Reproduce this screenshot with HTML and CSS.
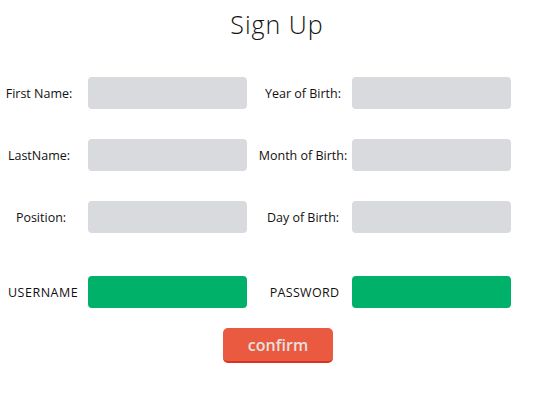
FILE: index.html
```html
<!DOCTYPE html>
<html>
<head>
<meta charset="utf-8">
<link rel="stylesheet" href="styles.css">
</head>
<body>
<div class="page">
  <h1 class="title">Sign Up</h1>
  <form class="form">
    <div class="grid">
      <label class="lbl lbl-left">First Name:</label>
      <div class="field"></div>
      <label class="lbl lbl-right">Year of Birth:</label>
      <div class="field"></div>

      <label class="lbl lbl-left">LastName:</label>
      <div class="field"></div>
      <label class="lbl lbl-right">Month of Birth:</label>
      <div class="field"></div>

      <label class="lbl lbl-left lbl-pos">Position:</label>
      <div class="field"></div>
      <label class="lbl lbl-right">Day of Birth:</label>
      <div class="field"></div>

      <label class="lbl lbl-left lbl-cred">USERNAME</label>
      <div class="field field-green row-cred"></div>
      <label class="lbl lbl-right lbl-cred">PASSWORD</label>
      <div class="field field-green row-cred"></div>
    </div>
    <div class="actions">
      <button type="button" class="confirm">confirm</button>
    </div>
  </form>
</div>
</body>
</html>
```

FILE: styles.css
```css
html, body {
  margin: 0;
  padding: 0;
  background: #ffffff;
}

body {
  font-family: "Open Sans", "DejaVu Sans", sans-serif;
  color: #111111;
}

.page {
  width: 550px;
  height: 400px;
}

.title {
  margin: 0;
  padding-top: 6px;
  padding-left: 4px;
  height: 36px;
  line-height: 36px;
  text-align: center;
  font-size: 25px;
  font-weight: 300;
  letter-spacing: 1px;
  color: #111111;
}

.form {
  margin: 0;
  padding-top: 35px;
}

.grid {
  display: grid;
  grid-template-columns: 88px 159px 105px 159px;
  grid-template-rows: 32px 32px 32px 45px;
  row-gap: 30px;
}

.grid .row-cred,
.grid .lbl-cred {
  align-self: end;
  height: 32px;
}

.lbl {
  display: flex;
  align-items: center;
  justify-content: center;
  font-size: 12.5px;
  white-space: nowrap;
}

.lbl-left {
  padding-right: 10px;
}

.lbl-pos {
  padding-right: 6px;
}

.lbl-left.lbl-cred {
  padding-right: 0;
  justify-content: flex-start;
  padding-left: 8px;
  letter-spacing: 0.5px;
}

.lbl-right {
  padding-left: 7px;
}

.lbl-right.lbl-cred {
  letter-spacing: 0.3px;
  padding-left: 10px;
}

.field {
  background: #d9dade;
  border-radius: 4px;
}

.field-green {
  background: #00b16a;
}

.actions {
  display: flex;
  justify-content: center;
  padding-top: 20px;
  padding-left: 6px;
}

.confirm {
  width: 110px;
  height: 35px;
  border: none;
  border-bottom: 2px solid #d8341f;
  border-radius: 5px;
  background: #e95a40;
  color: #e6e0df;
  font-family: "Open Sans", "DejaVu Sans", sans-serif;
  font-size: 16px;
  font-weight: 600;
  padding: 0;
  cursor: pointer;
}
```
